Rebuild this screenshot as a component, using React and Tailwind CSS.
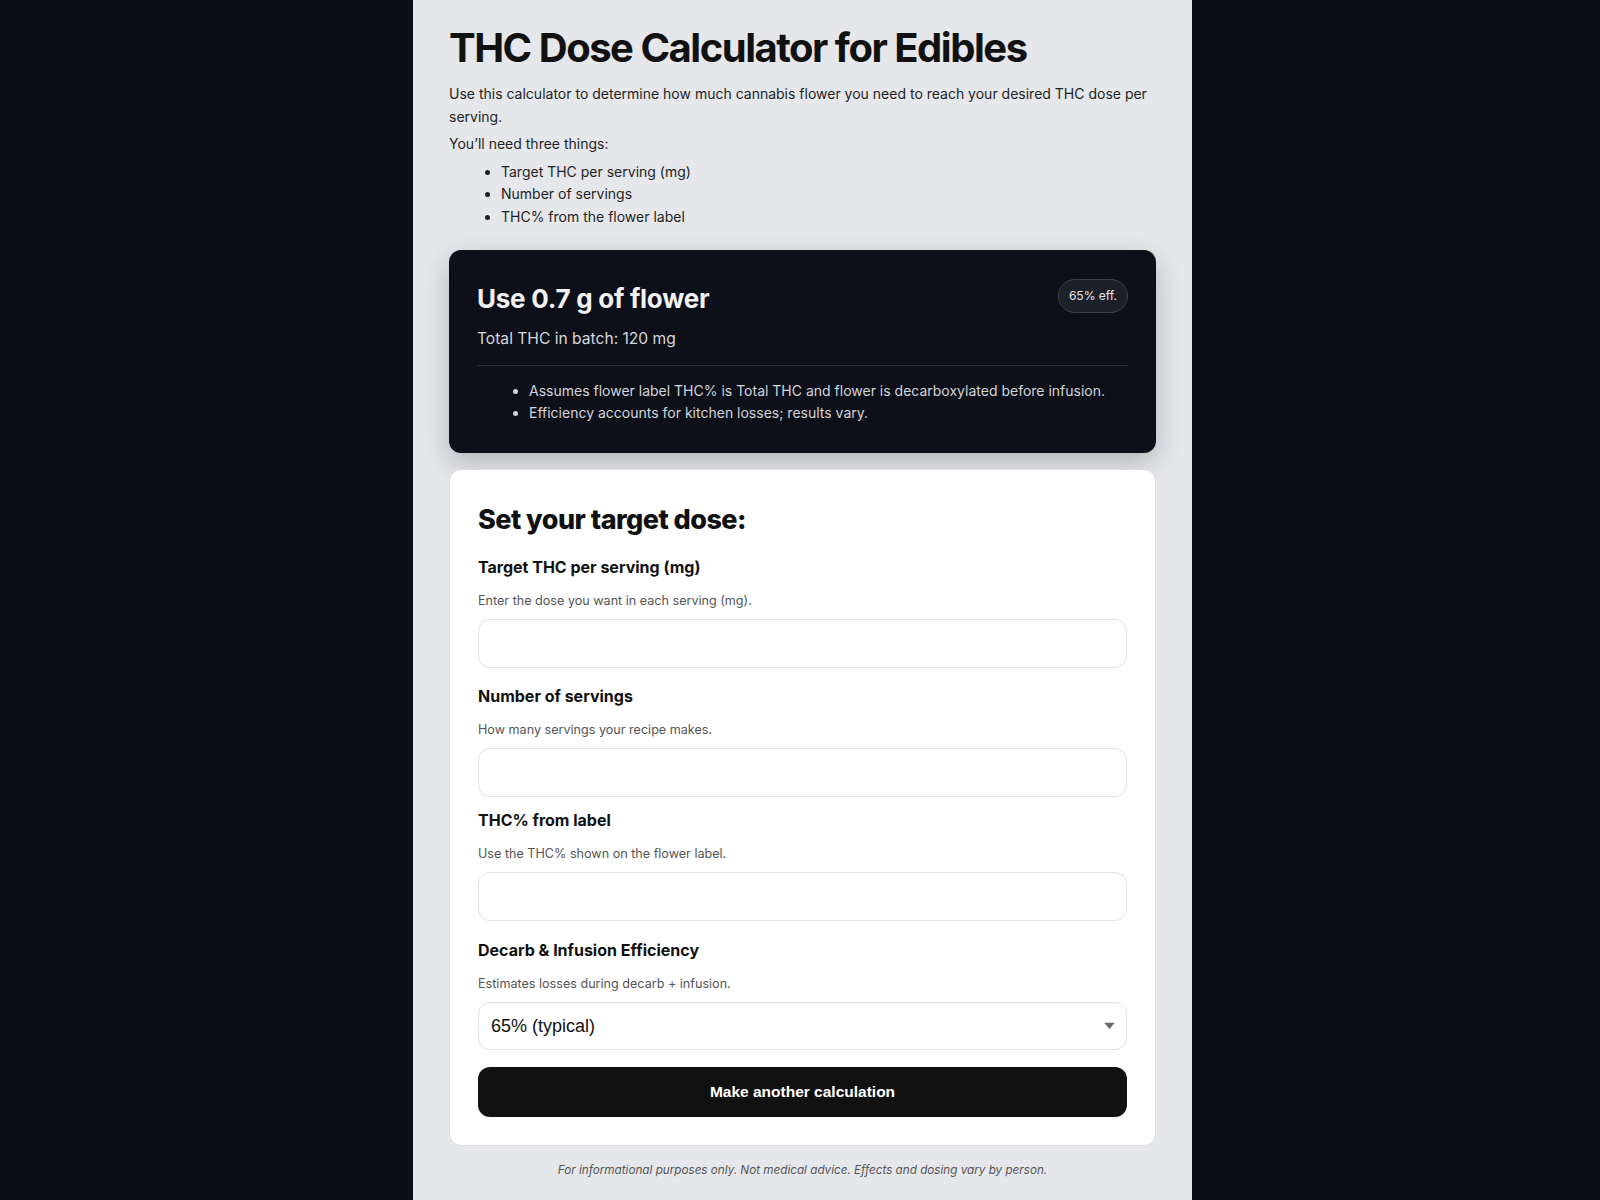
export default function App() {
  const Field = ({ label, help, mt }) => (
    <div className={mt}>
      <div className="text-[16px] leading-[24px] font-bold text-[#111111]">{label}</div>
      <div className="mt-[12px] text-[12.6px] leading-[20px] text-[#555555]">{help}</div>
      <input
        type="text"
        className="mt-[8px] block w-full h-[49px] rounded-[12px] border border-[#e2e2e2] bg-white px-3 outline-none"
      />
    </div>
  );

  return (
    <div className="min-h-screen bg-[#0c0f1a] font-[family-name:Inter,'Noto_Sans',sans-serif]">
      <div className="flex justify-center pl-[5px]">
        <div className="w-[779px] min-h-[1200px] bg-[#e5e7eb] px-9 pt-[24px] pb-10 text-[#1f1f1f]">
          <h1 className="text-[40px] leading-[48px] font-bold tracking-[-0.037em] text-[#111111]">
            THC Dose Calculator for Edibles
          </h1>
          <p className="mt-[11px] text-[14px] leading-[22.5px]">
            Use this calculator to determine how much cannabis flower you need to reach your desired THC dose per serving.
          </p>
          <p className="mt-[5px] text-[14px] leading-[22.5px]">You’ll need three things:</p>
          <ul className="mt-[5px] list-disc pl-[52px] text-[14px] leading-[22.5px]">
            <li>Target THC per serving (mg)</li>
            <li>Number of servings</li>
            <li>THC% from the flower label</li>
          </ul>

          <div className="mt-[22px] rounded-[12px] bg-[#0e1019] px-7 pt-7 pb-[29px] shadow-[0_10px_28px_rgba(0,0,0,0.22)]">
            <div className="flex items-start justify-between">
              <div className="mt-[6px] text-[26px] leading-[30px] font-bold tracking-[-0.01em] text-[#f1f1f3]">
                Use 0.7 g of flower
              </div>
              <div className="mt-px rounded-full border border-[#3b3e48] bg-[#1e2029] px-[10px] py-[8px] text-[12px] leading-[16px] text-[#e6e6ea]">
                65% eff.
              </div>
            </div>
            <div className="mt-[13px] text-[15.6px] leading-[24px] text-[#d6d7dc]">Total THC in batch: 120 mg</div>
            <div className="mt-[14px] h-px bg-[#2a2d37]" />
            <ul className="mt-[14px] list-disc pl-[52px] text-[14px] leading-[22px] text-[#d2d4da] marker:text-[#d2d4da]">
              <li>Assumes flower label THC% is Total THC and flower is decarboxylated before infusion.</li>
              <li>Efficiency accounts for kitchen losses; results vary.</li>
            </ul>
          </div>

          <div className="mt-[16px] rounded-[12px] border border-[#dedede] bg-white px-7 pt-[30px] pb-7">
            <h2 className="text-[27px] leading-[40px] font-extrabold tracking-[-0.02em] text-[#111111]">
              Set your target dose:
            </h2>
            <Field mt="mt-[15px]" label="Target THC per serving (mg)" help="Enter the dose you want in each serving (mg)." />
            <Field mt="mt-[16px]" label="Number of servings" help="How many servings your recipe makes." />
            <Field mt="mt-[11px]" label="THC% from label" help="Use the THC% shown on the flower label." />
            <div className="mt-[17px]">
              <div className="text-[16px] leading-[24px] font-bold text-[#111111]">Decarb &amp; Infusion Efficiency</div>
              <div className="mt-[12px] text-[12.6px] leading-[20px] text-[#555555]">Estimates losses during decarb + infusion.</div>
              <div className="relative mt-[8px]">
                <select
                  defaultValue="65"
                  className="block w-full h-[48px] appearance-none rounded-[12px] border border-[#e2e2e2] bg-white pl-[12px] pr-10 text-[18px] text-[#111111] outline-none font-[family-name:'Liberation_Sans',Arial,sans-serif]"
                >
                  <option value="50">50% (conservative)</option>
                  <option value="65">65% (typical)</option>
                  <option value="80">80% (optimistic)</option>
                </select>
                <svg className="pointer-events-none absolute right-[12px] top-1/2 -translate-y-1/2" width="11" height="7" viewBox="0 0 11 7">
                  <path d="M0 0 H11 L5.5 6.5 Z" fill="#6b6b6b" />
                </svg>
              </div>
            </div>
            <button
              type="button"
              className="mt-[17px] block w-full h-[50px] rounded-[12px] bg-[#111111] text-[15.5px] font-bold text-white font-[family-name:'Liberation_Sans',Arial,sans-serif]"
            >
              Make another calculation
            </button>
          </div>

          <p className="mt-[15px] text-center text-[11.7px] leading-[18px] italic text-[#555555]">
            For informational purposes only. Not medical advice. Effects and dosing vary by person.
          </p>
        </div>
      </div>
    </div>
  );
}
